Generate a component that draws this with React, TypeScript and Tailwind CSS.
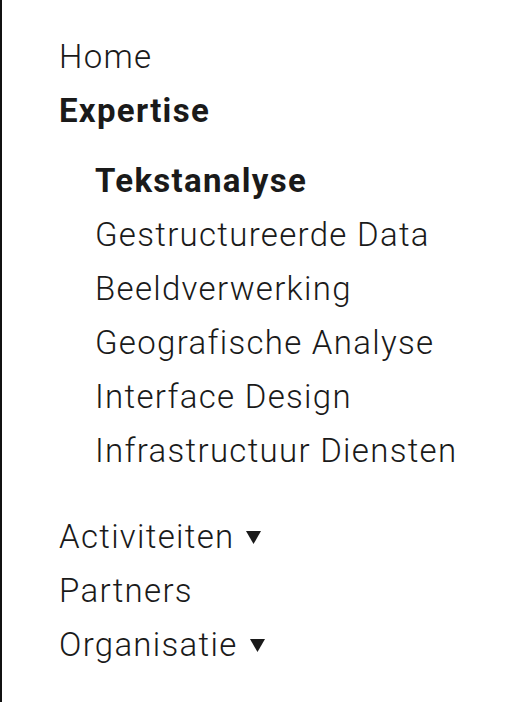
import React from "react";

const Caret = () => (
  <svg width="15" height="13" viewBox="0 0 15 13" className="ml-[12px] inline-block" aria-hidden>
    <polygon points="0,0 15,0 7.5,13" fill="#1a1a1a" />
  </svg>
);

const sub = [
  { t: "Tekstanalyse", b: true },
  { t: "Gestructureerde Data" },
  { t: "Beeldverwerking" },
  { t: "Geografische Analyse" },
  { t: "Interface Design" },
  { t: "Infrastructuur Diensten" },
];

export default function App() {
  return (
    <div className="w-[526px] h-[702px] bg-white border-l-2 border-[#111] overflow-hidden" style={{ fontFamily: "Roboto, 'Liberation Sans', sans-serif" }}>
      <ul className="pl-[57px] pt-[30px] text-[33px] leading-[54px] font-light tracking-[1.3px] text-[#1a1a1a]">
        <li>Home</li>
        <li className="font-bold">Expertise</li>
        <li>
          <ul className="pl-[36px] mt-[16px] mb-[32px]">
            {sub.map((s) => (
              <li key={s.t} className={s.b ? "font-bold" : ""}>{s.t}</li>
            ))}
          </ul>
        </li>
        <li className="flex items-center">Activiteiten<Caret /></li>
        <li>Partners</li>
        <li className="flex items-center">Organisatie<Caret /></li>
      </ul>
    </div>
  );
}
